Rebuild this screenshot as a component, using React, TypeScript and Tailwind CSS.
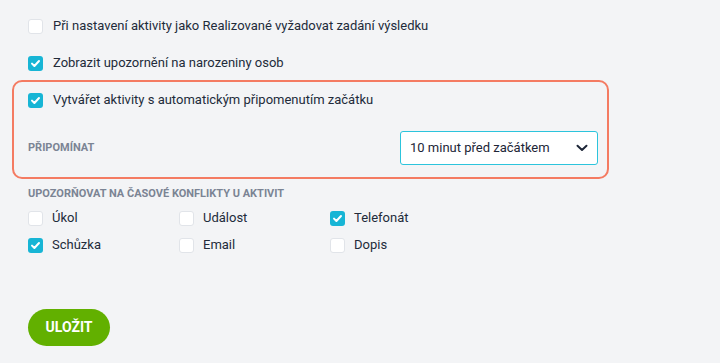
import React from "react";

function Box({ checked }: { checked?: boolean }) {
  if (checked) {
    return (
      <span className="flex h-[15px] w-[15px] shrink-0 items-center justify-center rounded-[3px] bg-[#17b5d5]">
        <svg width="11" height="11" viewBox="0 0 11 11" fill="none">
          <path d="M2 5.6 L4.4 8 L9 3" stroke="#fff" strokeWidth="2" strokeLinecap="round" strokeLinejoin="round" />
        </svg>
      </span>
    );
  }
  return <span className="h-[15px] w-[15px] shrink-0 rounded-[3px] border border-[#e1e4e9] bg-white" />;
}

function Item({ checked, label, gap = "gap-[10px]" }: { checked?: boolean; label: string; gap?: string }) {
  return (
    <div className={`flex h-5 items-center ${gap}`}>
      <Box checked={checked} />
      <span className="text-[13px] leading-5 text-[#222b3a]">{label}</span>
    </div>
  );
}

export default function App() {
  return (
    <div
      className="h-[363px] w-[720px] bg-[#f3f4f6] px-3 pt-4"
      style={{ fontFamily: "Roboto, 'Noto Sans', sans-serif" }}
    >
      <div className="pl-4">
        <Item label="Při nastavení aktivity jako Realizované vyžadovat zadání výsledku" />
      </div>
      <div className="mt-[17px] pl-4">
        <Item checked label="Zobrazit upozornění na narozeniny osob" />
      </div>
      <div className="mt-[7px] w-[597px] rounded-[10px] border-2 border-[#f47b62] pb-3 pl-[14px] pr-[9px] pt-2">
        <Item checked label="Vytvářet aktivity s automatickým připomenutím začátku" />
        <div className="mt-[21px] flex items-center justify-between">
          <span className="text-[11px] font-bold uppercase leading-[14px] text-[#7b8494]">Připomínat</span>
          <div className="flex h-[34px] w-[198px] items-center justify-between rounded-[3px] border border-[#2cc4dc] bg-white pl-[9px] pr-[9px]">
            <span className="text-[13px] text-[#1d2637]">10 minut před začátkem</span>
            <svg width="12" height="8" viewBox="0 0 12 8" fill="none">
              <path d="M1.5 1.8 L6 6 L10.5 1.8" stroke="#1d2637" strokeWidth="2" strokeLinecap="round" strokeLinejoin="round" />
            </svg>
          </div>
        </div>
      </div>
      <div className="mt-2 pl-4">
        <div className="text-[11px] font-bold uppercase leading-[14px] text-[#7b8494]">
          Upozorňovat na časové konflikty u aktivit
        </div>
        <div className="mt-[7px] grid grid-cols-[151px_151px_151px] gap-y-[7px]">
          <Item gap="gap-[9px]" label="Úkol" />
          <Item gap="gap-[9px]" label="Událost" />
          <Item gap="gap-[9px]" checked label="Telefonát" />
          <Item gap="gap-[9px]" checked label="Schůzka" />
          <Item gap="gap-[9px]" label="Email" />
          <Item gap="gap-[9px]" label="Dopis" />
        </div>
        <button className="mt-[54px] flex h-[37px] w-[82px] items-center justify-center rounded-full bg-[#62b000] text-[14px] font-bold text-white">
          ULOŽIT
        </button>
      </div>
    </div>
  );
}
